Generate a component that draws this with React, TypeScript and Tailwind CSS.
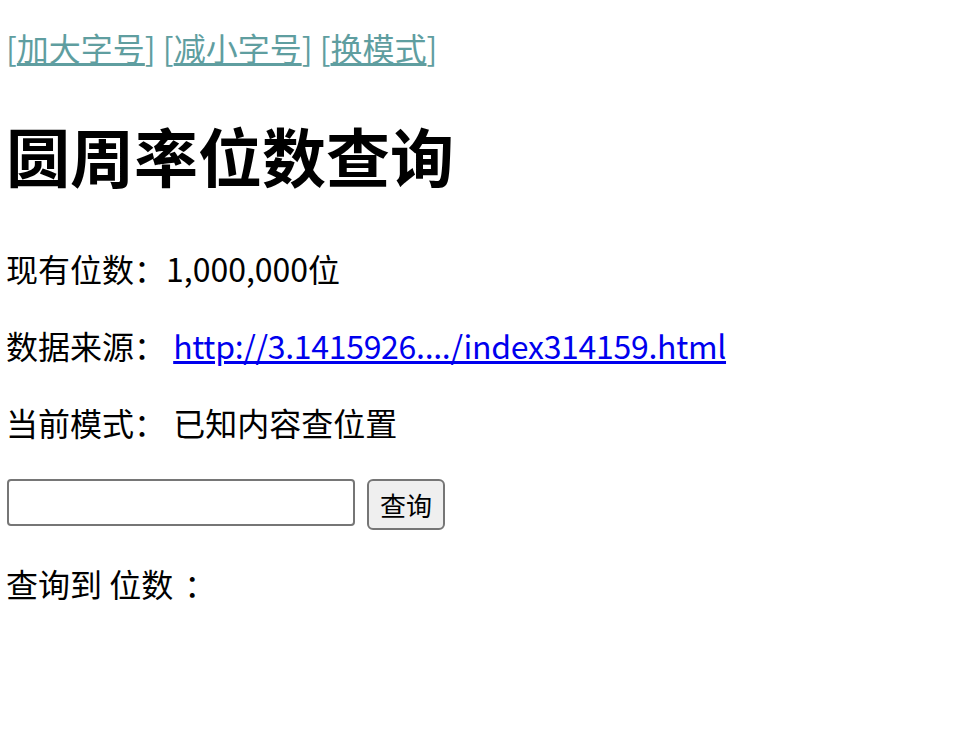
export default function App() {
  return (
    <div className="min-h-screen bg-white pl-[6px] text-[32px] text-black [font-family:'Noto_Sans_CJK_SC',sans-serif]">
      {/* font size / mode controls */}
      <div className="pt-[27px] leading-[40px] text-[#5f9ea0]">
        [<a href="#" className="underline">加大字号</a>] [<a href="#" className="underline">减小字号</a>] [<a href="#" className="underline">换模式</a>]
      </div>

      <h1 className="mt-[51px] text-[64px] font-bold leading-[72px]">圆周率位数查询</h1>

      <p className="mt-[58px] leading-[40px]">现有位数：1,000,000位</p>
      <p className="mt-[37px] leading-[40px]">
        数据来源：{" "}
        <a href="#" className="tracking-[-0.3px] text-[#0000ee] underline">
          http://3.1415926..../index314159.html
        </a>
      </p>
      <p className="mt-[37px] leading-[40px]">当前模式： 已知内容查位置</p>

      <div className="mt-[37px] flex items-start">
        <input
          type="text"
          className="ml-px h-[47px] w-[348px] rounded-[4px] border-2 border-[#767676] bg-white"
        />
        <button className="ml-[12px] h-[51px] w-[78px] rounded-[6px] border-2 border-[#767676] bg-[#efefef] text-[26px] leading-none">
          查询
        </button>
      </div>

      <p className="mt-[33px] leading-[40px]">
        查询到 位数 <span className="ml-[4px]">：</span>
      </p>
    </div>
  );
}
